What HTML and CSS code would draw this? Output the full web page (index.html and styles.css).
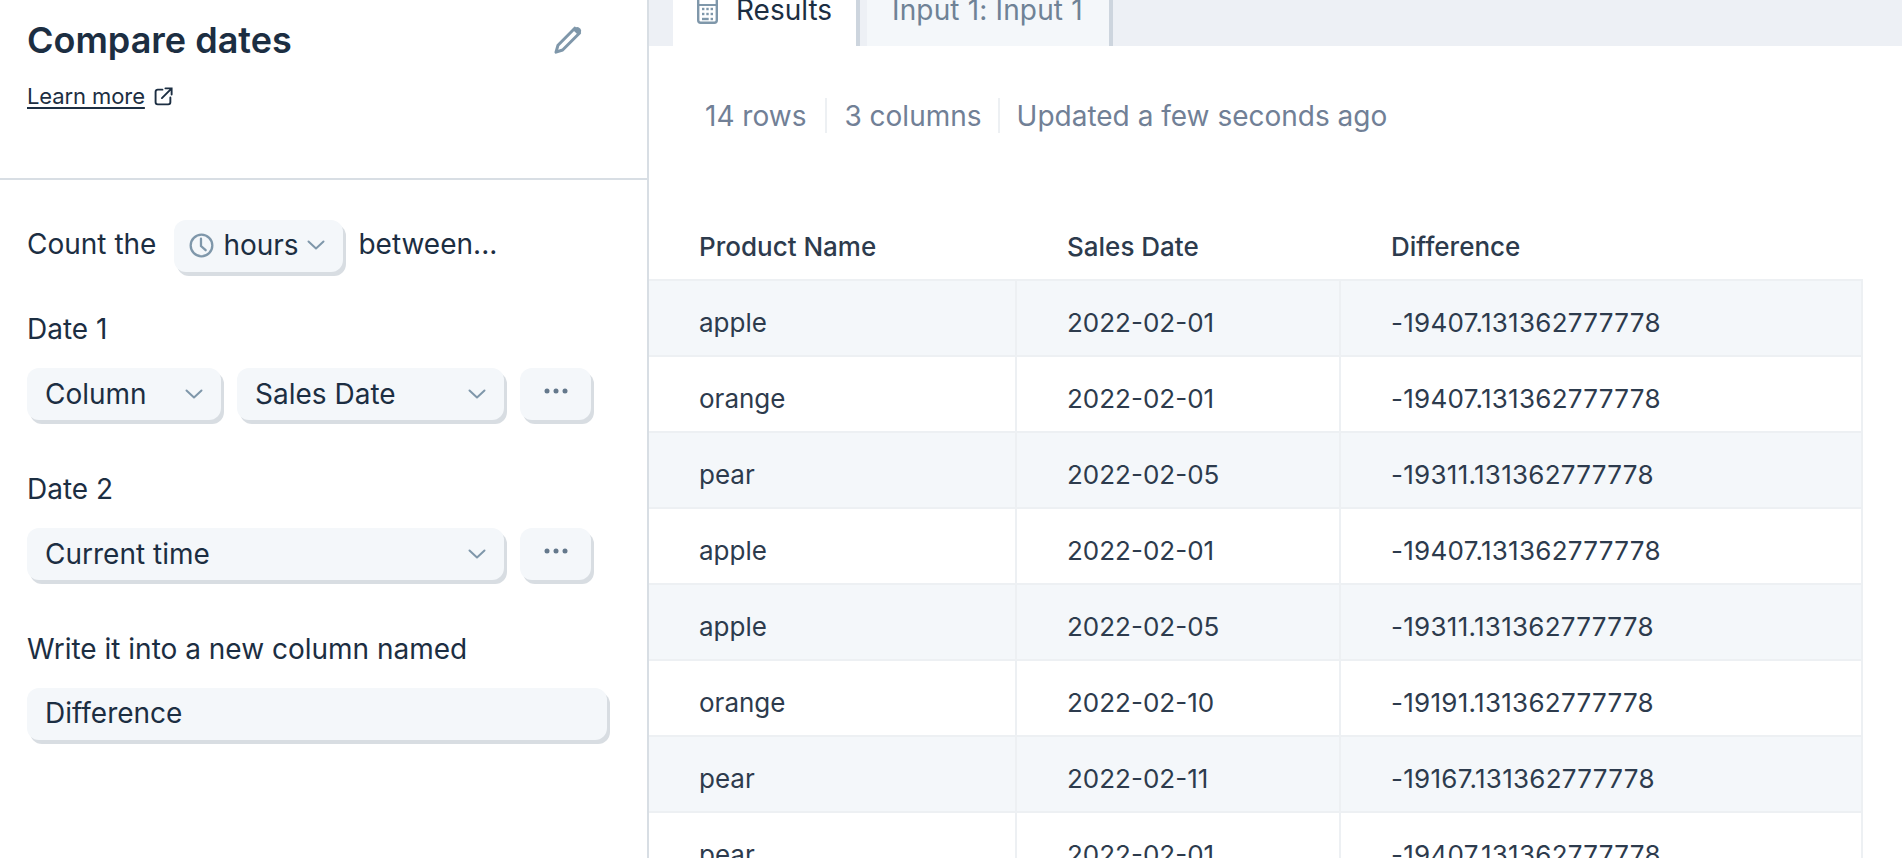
FILE: index.html
```html
<!DOCTYPE html>
<html lang="en">
<head>
<meta charset="utf-8">
<title>Compare dates</title>
<link rel="stylesheet" href="styles.css">
</head>
<body>
<div class="app">
  <aside class="sidebar">
    <header class="side-head">
      <div class="title-row">
        <h1 class="title">Compare dates</h1>
        <svg class="pencil" viewBox="0 0 30 30"><path d="M21.8 3.2 26.6 8 9.6 25 3 27.2 5 20.2Z" fill="none" stroke="#7f97aa" stroke-width="3" stroke-linejoin="round"/><path d="M20 5 22 3a3.2 3.2 0 0 1 4.5 0l.6.6a3.2 3.2 0 0 1 0 4.5l-2 2Z" fill="#7f97aa"/></svg>
      </div>
      <div class="learn"><a class="learn-link" href="#">Learn more</a>
        <svg class="ext" viewBox="0 0 18 18"><path d="M8 2.5H3.5a2 2 0 0 0-2 2V14.5a2 2 0 0 0 2 2H13.5a2 2 0 0 0 2-2V10" fill="none" stroke="#1c2e42" stroke-width="1.8" stroke-linecap="round"/><path d="M7.5 10.5 16.5 1.5M10.8 1.3H16.7V7.2" fill="none" stroke="#1c2e42" stroke-width="1.8" stroke-linecap="round"/></svg>
      </div>
    </header>
    <section class="form">
      <div class="count-row">
        <span class="count-text">Count the</span>
        <button class="ctl hours">
          <svg class="clock" viewBox="0 0 24 24"><circle cx="12" cy="12" r="10.4" fill="none" stroke="#7f97aa" stroke-width="2.2"/><path d="M11.5 5.5V12.5L16 16.5" fill="none" stroke="#7f97aa" stroke-width="2.2" stroke-linecap="round"/></svg>
          <span>hours</span>
          <svg class="chev" viewBox="0 0 18 10"><path d="M1.5 1.5 9 8.5 16.5 1.5" fill="none" stroke="#7f97aa" stroke-width="2" stroke-linecap="round" stroke-linejoin="round"/></svg>
        </button>
        <span class="count-text">between...</span>
      </div>
      <label class="lbl first">Date 1</label>
      <div class="ctl-row">
        <button class="ctl sel col"><span>Column</span><svg class="chev" viewBox="0 0 18 10"><path d="M1.5 1.5 9 8.5 16.5 1.5" fill="none" stroke="#7f97aa" stroke-width="2" stroke-linecap="round" stroke-linejoin="round"/></svg></button>
        <button class="ctl sel wide"><span>Sales Date</span><svg class="chev" viewBox="0 0 18 10"><path d="M1.5 1.5 9 8.5 16.5 1.5" fill="none" stroke="#7f97aa" stroke-width="2" stroke-linecap="round" stroke-linejoin="round"/></svg></button>
        <button class="ctl more"><svg class="dots" viewBox="0 0 24 6"><circle cx="3" cy="3" r="2.5"/><circle cx="12" cy="3" r="2.5"/><circle cx="21" cy="3" r="2.5"/></svg></button>
      </div>
      <label class="lbl">Date 2</label>
      <div class="ctl-row">
        <button class="ctl sel full"><span>Current time</span><svg class="chev" viewBox="0 0 18 10"><path d="M1.5 1.5 9 8.5 16.5 1.5" fill="none" stroke="#7f97aa" stroke-width="2" stroke-linecap="round" stroke-linejoin="round"/></svg></button>
        <button class="ctl more"><svg class="dots" viewBox="0 0 24 6"><circle cx="3" cy="3" r="2.5"/><circle cx="12" cy="3" r="2.5"/><circle cx="21" cy="3" r="2.5"/></svg></button>
      </div>
      <label class="lbl">Write it into a new column named</label>
      <div class="ctl text-input">Difference</div>
    </section>
  </aside>
  <main class="main">
    <nav class="tabs">
      <div class="tab active">
        <svg class="calc" viewBox="0 0 21 32"><rect x="1.2" y="1.2" width="18.6" height="29.6" rx="2.5" fill="none" stroke="#7f97aa" stroke-width="2.4"/><path d="M1 13H20" stroke="#7f97aa" stroke-width="2"/><g fill="#7f97aa"><rect x="5" y="15.8" width="2.4" height="2.4"/><rect x="9.3" y="15.8" width="2.4" height="2.4"/><rect x="13.6" y="15.8" width="2.4" height="2.4"/><rect x="5" y="20.8" width="2.4" height="2.4"/><rect x="9.3" y="20.8" width="2.4" height="2.4"/><rect x="13.6" y="20.8" width="2.4" height="2.4"/><rect x="5" y="25.8" width="6.7" height="2.4"/><rect x="13.6" y="25.8" width="2.4" height="2.4"/></g></svg>
        <span>Results</span>
      </div>
      <div class="tab input-tab">Input 1: Input 1</div>
    </nav>
    <div class="stats">
      <span class="stat">14 rows</span>
      <span class="stat">3 columns</span>
      <span class="stat">Updated a few seconds ago</span>
    </div>
    <table class="grid">
      <thead>
        <tr><th class="c1">Product Name</th><th class="c2">Sales Date</th><th class="c3">Difference</th></tr>
      </thead>
      <tbody>
        <tr><td>apple</td><td>2022-02-01</td><td>-19407.131362777778</td></tr>
        <tr><td>orange</td><td>2022-02-01</td><td>-19407.131362777778</td></tr>
        <tr><td>pear</td><td>2022-02-05</td><td>-19311.131362777778</td></tr>
        <tr><td>apple</td><td>2022-02-01</td><td>-19407.131362777778</td></tr>
        <tr><td>apple</td><td>2022-02-05</td><td>-19311.131362777778</td></tr>
        <tr><td>orange</td><td>2022-02-10</td><td>-19191.131362777778</td></tr>
        <tr><td>pear</td><td>2022-02-11</td><td>-19167.131362777778</td></tr>
        <tr><td>pear</td><td>2022-02-01</td><td>-19407.131362777778</td></tr>
      </tbody>
    </table>
  </main>
</div>
</body>
</html>
```

FILE: styles.css
```css
* { box-sizing: border-box; }
html, body { margin: 0; height: 100%; overflow: hidden; background: #fff; }
body { font-family: Inter, "Noto Sans", sans-serif; color: #1c2e42; }
.app { display: flex; width: 1902px; height: 858px; overflow: hidden; }

.sidebar { width: 649px; flex: none; border-right: 2px solid #d8dee4; }
.side-head { height: 180px; border-bottom: 2px solid #d8dee4; padding: 0 26px 0 27px; }
.title-row { display: flex; justify-content: space-between; align-items: center; height: 80px; padding-right: 38px; }
.title { margin: 0; font-size: 36px; font-weight: 600; line-height: 80px; color: #1c2e42; }
.pencil { width: 30px; height: 30px; flex: none; }
.learn { display: flex; align-items: center; gap: 9px; height: 32px; }
.learn-link { font-size: 22px; letter-spacing: -.1px; color: #1c2e42; text-decoration: underline; text-underline-offset: 3px; }
.ext { width: 19px; height: 19px; }

.form { padding: 40px 26px 0 27px; font-size: 28px; }
.count-row { display: flex; align-items: center; height: 52px; }
.count-text { padding-bottom: 5px; }
.ctl { font: inherit; color: inherit; border: 0; background: #f4f7fa; border-radius: 12px; box-shadow: 3px 4px 0 #d8dde2; height: 52px; display: flex; align-items: center; padding-bottom: 1px; }
.hours { width: 169px; padding: 0 15px 2px; gap: 9px; flex: none; margin: 0 15px 0 18px; }
.hours .chev { margin-left: -1px; }
.clock { width: 25px; height: 25px; flex: none; }
.chev { width: 18px; height: 10px; flex: none; }
.lbl { display: block; height: 32px; line-height: 32px; margin: 0; }
.lbl.first { margin-top: 41px; }
.ctl-row { display: flex; gap: 16px; margin: 23px 0 53px; height: 52px; }
.sel { justify-content: space-between; padding: 0 18px 1px; }
.col { width: 194px; }
.wide { width: 267px; }
.full { width: 477px; }
.more { width: 71px; justify-content: center; padding: 0; }
.dots { width: 24px; height: 6px; fill: #64788c; margin-top: -6px; }
.text-input { width: 580px; padding: 0 18px 2px; margin-top: 23px; }

.main { flex: 1; min-width: 0; display: flex; flex-direction: column; }
.tabs { height: 46px; flex: none; background: #edf0f5; display: flex; align-items: flex-end; overflow: hidden; padding-left: 24px; gap: 7px; }
.tab { height: 56px; flex: none; display: flex; align-items: center; padding: 0 26px 16px 25px; font-size: 28px; color: #6f8296; background: #f4f7fa; border-right: 4px solid #cdd5de; white-space: nowrap; }
.tab.active { background: #fff; color: #1c2e42; width: 187px; gap: 18px; padding-left: 24px; }
.input-tab { letter-spacing: .15px; }
.calc { width: 21px; height: 32px; flex: none; margin-bottom: 5px; }

.stats { display: flex; align-items: center; margin: 52px 0 0 56px; height: 35px; font-size: 28px; color: #718096; }
.stat { padding: 0 19px; height: 35px; line-height: 37px; border-left: 2px solid #edf0f3; }
.stat:first-child { border-left: 0; padding-left: 0; }
.stat:nth-child(2) { padding: 0 16px 0 17px; }
.stat:nth-child(3) { padding-left: 17px; }

.grid { table-layout: fixed; width: 1214px; border-collapse: separate; border-spacing: 0; }
.grid th { height: 148px; padding: 81px 0 0 50px; text-align: left; font-size: 26px; font-weight: 500; color: #2d3b4d; vertical-align: middle; border-bottom: 2px solid #edf0f3; }
.c1 { width: 368px; }
.c2 { width: 324px; }
.c3 { width: 522px; }
.grid td { height: 76px; padding: 9px 0 0 50px; font-size: 26px; color: #2d3b4d; border-bottom: 2px solid #edf0f3; border-right: 2px solid #edf0f3; vertical-align: middle; white-space: nowrap; }
.grid td:last-child { letter-spacing: .27px; }
.grid tbody tr:nth-child(odd) td { background: #f4f7fa; }
```
